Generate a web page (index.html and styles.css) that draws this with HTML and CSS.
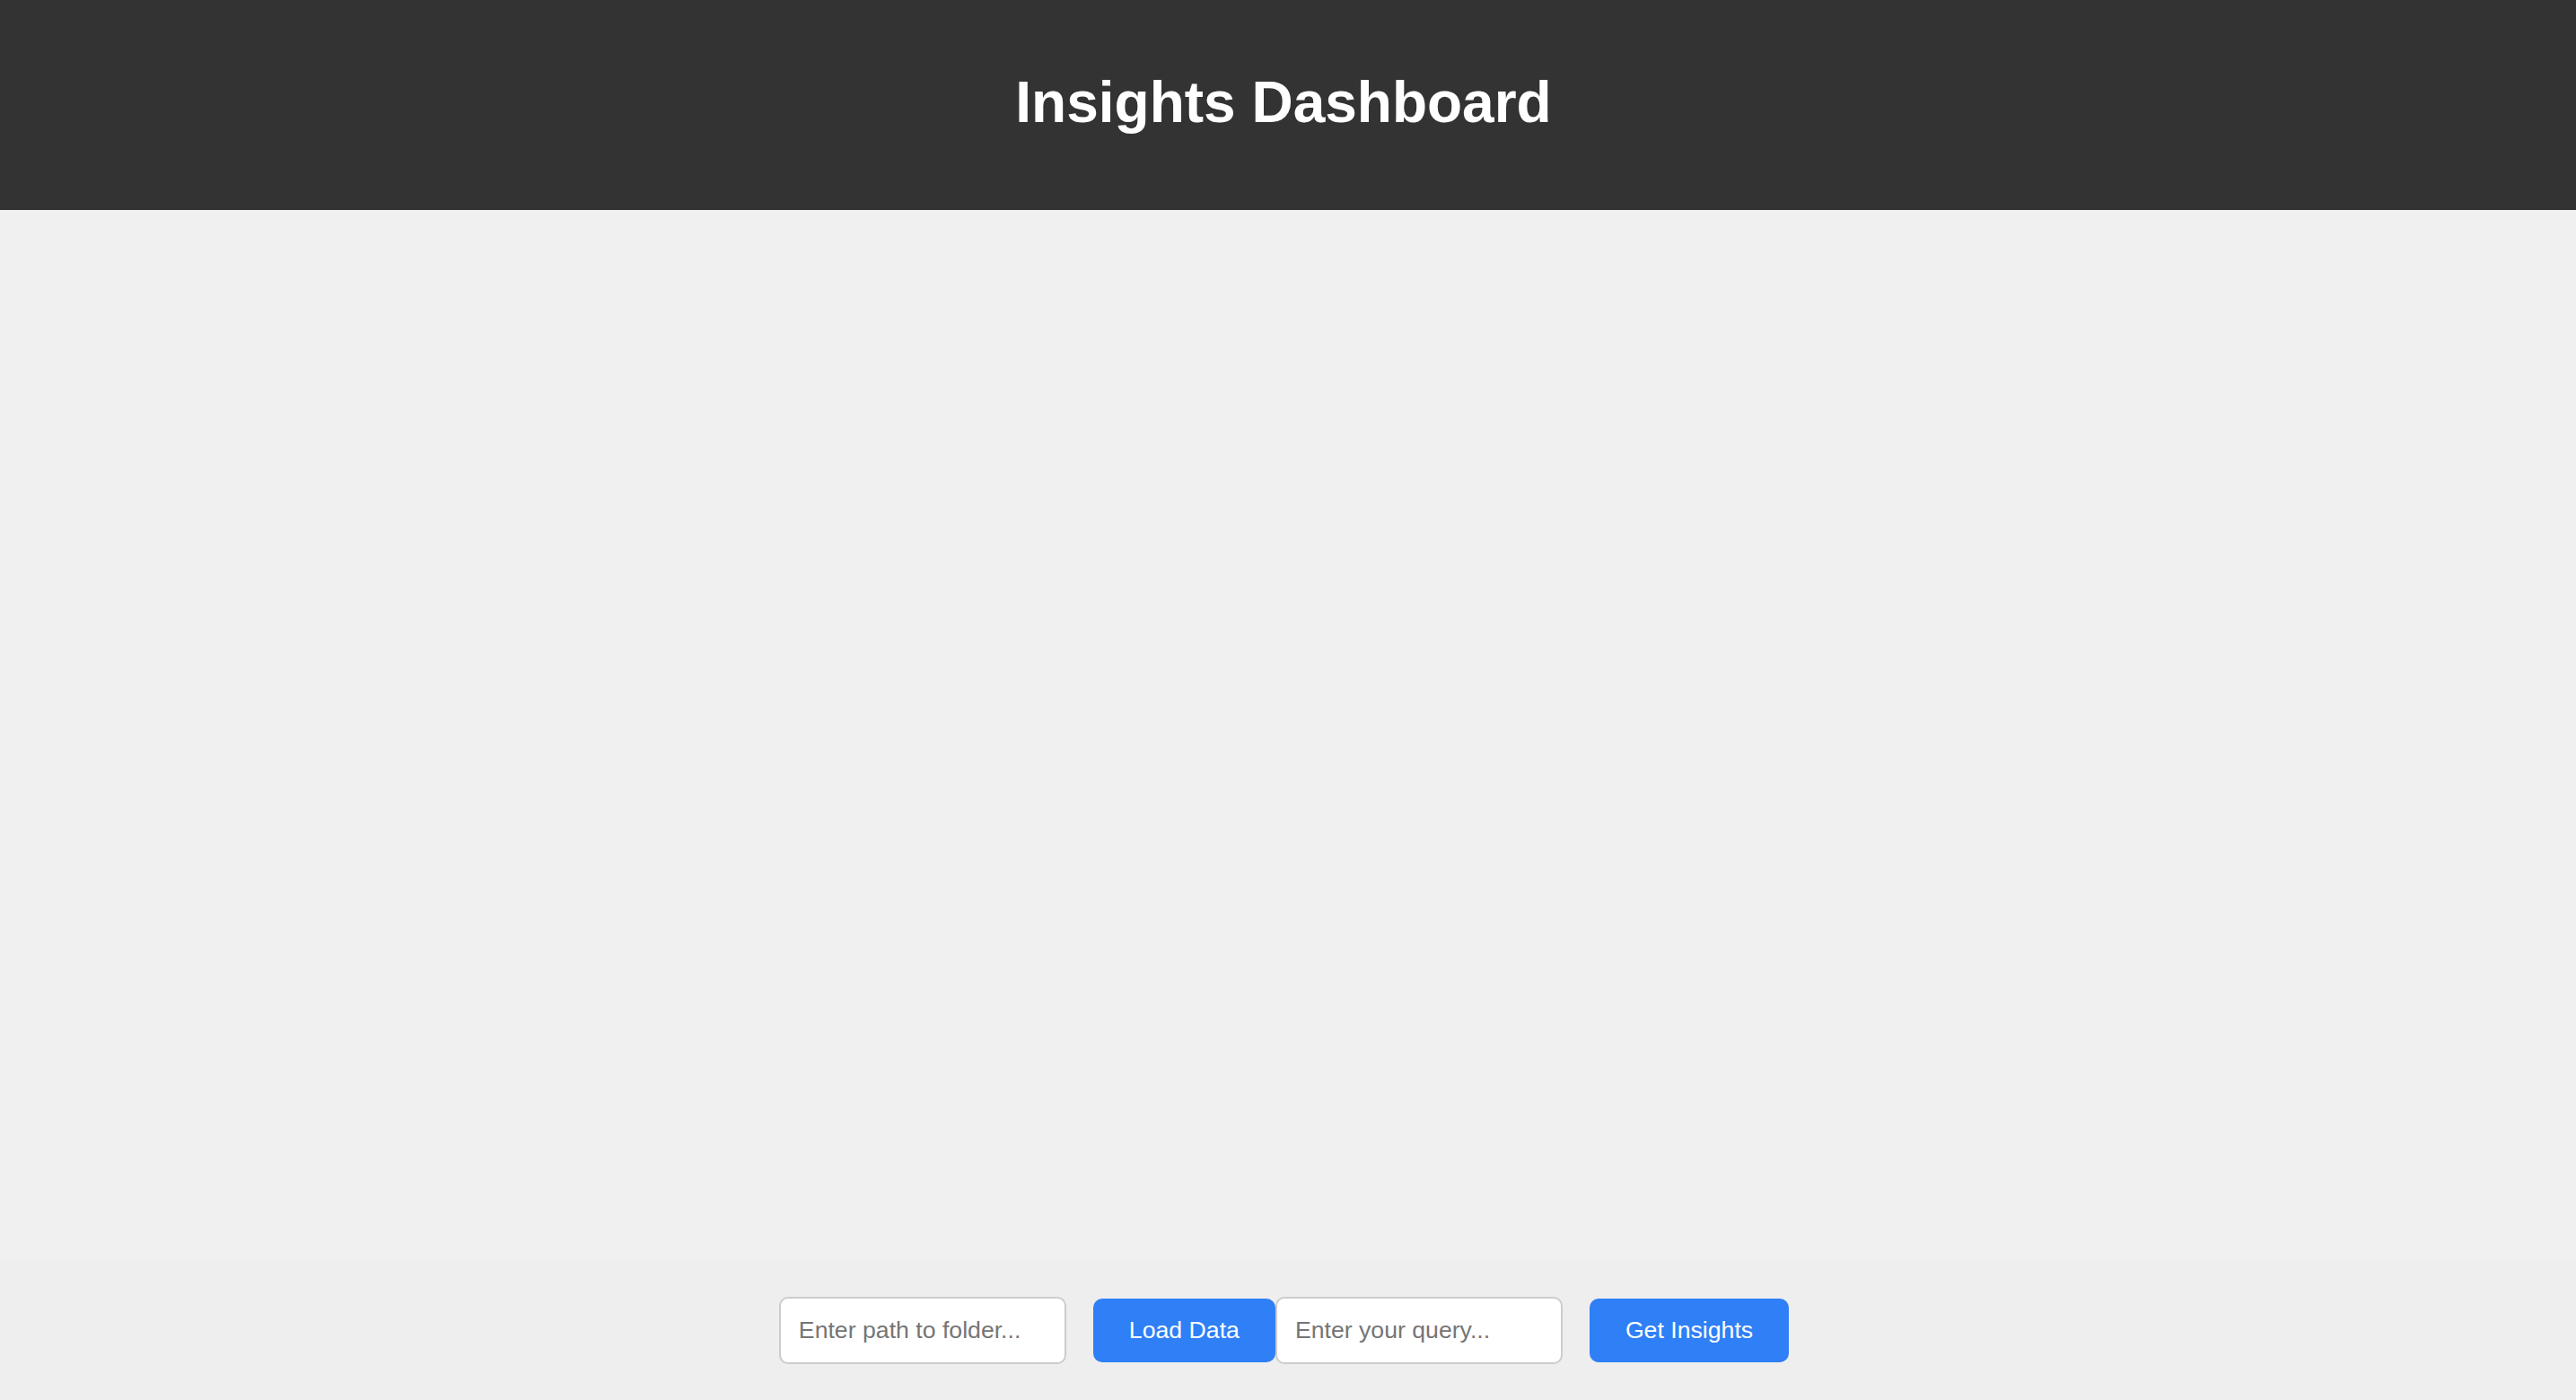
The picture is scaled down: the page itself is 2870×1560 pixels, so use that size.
FILE: index.html
```html
<!DOCTYPE html>
<html lang="en">
<head>
<meta charset="utf-8">
<title>Insights Dashboard</title>
<link rel="stylesheet" href="styles.css">
</head>
<body>
<div class="app">
  <header class="header">
    <h1 class="title">Insights Dashboard</h1>
  </header>
  <main class="main"></main>
  <footer class="controls">
    <div class="group">
      <input class="field" type="text" placeholder="Enter path to folder...">
      <button class="btn" type="button">Load Data</button>
    </div>
    <div class="group">
      <input class="field" type="text" placeholder="Enter your query...">
      <button class="btn" type="button">Get Insights</button>
    </div>
  </footer>
</div>
</body>
</html>
```

FILE: styles.css
```css
* { box-sizing: border-box; }

html, body {
  margin: 0;
  padding: 0;
  height: 100%;
  overflow: hidden;
}

body {
  font-family: "Liberation Sans", Arial, sans-serif;
  background: #f0f0f0;
}

.app {
  display: flex;
  flex-direction: column;
  height: 100vh;
}

.header {
  flex: none;
  background: #333333;
  color: #ffffff;
  padding: 77px 10px 83px 0;
  text-align: center;
}

.title {
  margin: 0;
  font-size: 64px;
  line-height: 74px;
  font-weight: 700;
}

.main {
  flex: 1;
  min-height: 0;
  background: #f0f0f0;
}

.controls {
  flex: none;
  display: flex;
  justify-content: center;
  align-items: center;
  padding: 40px 9px 40px 0;
  background: #eeeeee;
}

.group {
  display: flex;
  align-items: center;
}

.field {
  width: 320px;
  height: 75px;
  padding: 0 20px;
  border: 2px solid #cccccc;
  border-radius: 10px;
  background: #ffffff;
  font-family: "Liberation Sans", Arial, sans-serif;
  font-size: 26.67px;
  line-height: 31px;
  color: #333333;
  margin-right: 30px;
  outline: none;
}

.field::placeholder {
  color: #757575;
}

.btn {
  height: 71px;
  padding: 0 40px;
  border: none;
  border-radius: 10px;
  background: #2f7ff6;
  color: #ffffff;
  font-family: "Liberation Sans", Arial, sans-serif;
  font-size: 26.67px;
  line-height: 31px;
  cursor: pointer;
}
```
